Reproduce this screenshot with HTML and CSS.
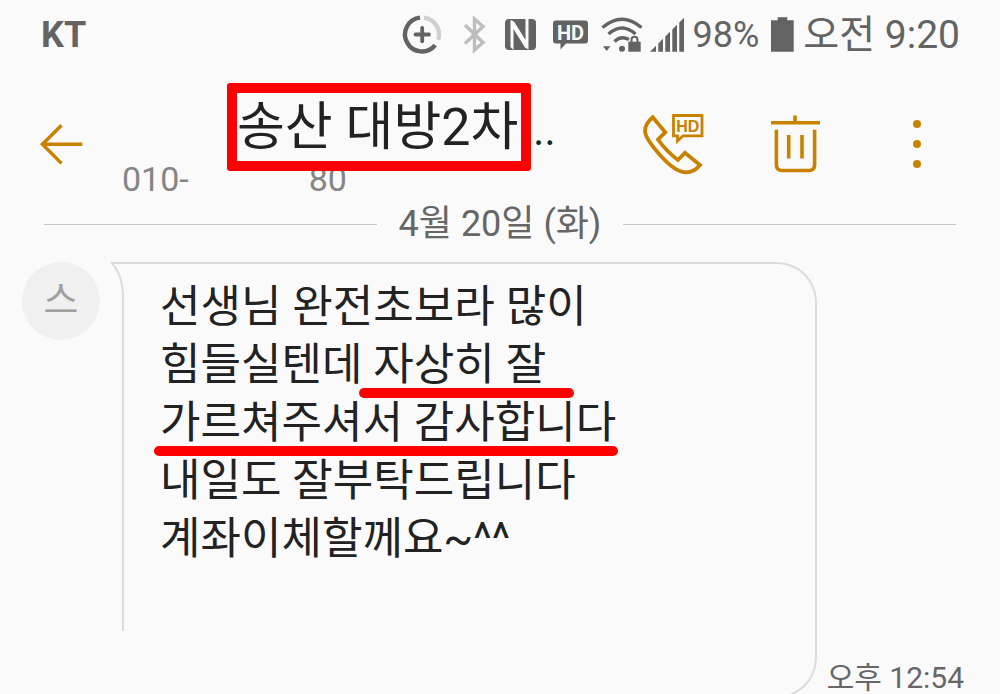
FILE: index.html
```html
<!DOCTYPE html>
<html lang="ko">
<head>
  <meta charset="UTF-8">
  <meta name="viewport" content="width=device-width, initial-scale=1">
  <title>메시지</title>
  <link rel="stylesheet" href="styles.css">
</head>
<body>
  <div class="status-bar">
    <span class="carrier">KT</span>
    <div class="status-icons">
      <!-- data saver -->
      <svg width="42" height="40" fill="none" stroke="#636363" stroke-width="4.4">
        <path d="M19 2.6A17 17 0 1 0 34.2 30.2"/>
        <path d="M23 2.6A17 17 0 0 1 37.2 24.8" stroke="#cfcfcf"/>
        <path d="M14.5 19.5H28M21.2 12.8V26.3" stroke-width="3.8" stroke-linecap="round"/>
      </svg>
      <!-- bluetooth -->
      <svg width="44" height="40" fill="none" stroke="#bdbdbd" stroke-width="3.4">
        <path d="M14 10L32 27.5L23.5 35V4L32 11.5L14 28.5"/>
      </svg>
      <!-- nfc -->
      <svg width="36" height="40">
        <rect x="2" y="4" width="31" height="31" rx="4" fill="#636363"/>
        <path d="M7.5 32V5L11 6.5L22.5 25V4H25.5V34.5L22 32.5L10.5 14V35Z" fill="#fafafa"/>
      </svg>
      <!-- hd voice -->
      <svg width="46" height="40">
        <path d="M9 5.5H38Q41 5.5 41 8.5V25.5Q41 28.5 38 28.5H19L13.5 34.5V28.5H9Q6 28.5 6 25.5V8.5Q6 5.5 9 5.5Z" fill="#636363"/>
        <text x="23.5" y="24.5" class="hd-status">HD</text>
      </svg>
      <!-- wifi -->
      <svg width="42" height="40" fill="none" stroke="#636363" stroke-width="3.4">
        <path d="M1.5 12.5Q21 -4 40.5 12.5M7.5 19Q21 7 34.5 19M13.5 26.5Q20 20 28 24.5"/>
        <circle cx="21" cy="33.7" r="3" fill="#636363" stroke="none"/>
        <path d="M2 31.3H9.4L5.7 36Z" fill="#636363" stroke="none"/>
        <path d="M30.5 28V25Q30.5 21.8 33.5 21.8T36.5 25V28" stroke-width="2"/>
        <rect x="27.3" y="26.7" width="12.4" height="10" fill="#636363" stroke="none"/>
      </svg>
      <!-- signal -->
      <svg width="34" height="40" fill="#636363">
        <path d="M-1 36.7L5 30.7V36.7ZM7.3 28.4L12 23.7V36.7H7.3ZM14.3 21.4L19 16.7V36.7H14.3ZM21.3 14.4L26 9.7V36.7H21.3ZM28.3 7.4L33 2.7V36.7H28.3Z"/>
      </svg>
      <span class="battery-level">98%</span>
      <svg width="28" height="40" fill="#636363">
        <path d="M10.7 2.3H20.3V5.3H26.7V36.7H4V5.3H10.7Z"/>
      </svg>
      <span class="clock">오전 9:20</span>
    </div>
  </div>

  <header class="chat-header">
    <button type="button" class="icon-button" aria-label="뒤로">
      <svg width="44" height="44" fill="none" stroke="#c98100" stroke-width="3.4">
        <path d="M42.3 22.3H2.5M21.5 3.2L2.4 22.3L21.5 41.4"/>
      </svg>
    </button>
    <div class="contact">
      <div class="contact-title">
        <h1 class="contact-name">송산 대방2차</h1>
        <span class="contact-more">..</span>
      </div>
      <div class="contact-number"><span>010-</span><span>80</span></div>
    </div>
    <div class="actions">
      <button type="button" class="icon-button" aria-label="HD 통화">
        <svg width="64" height="64" fill="none" stroke="#c98100" stroke-width="3.8">
          <path d="M11.7 5.3L24.3 20.3L17 27.5Q25 39 37 48L44 40.8L59 53Q53 60.5 44.5 60.3Q34 60 19 43Q4 26 4 19Q4 12 11.7 5.3Z"/>
          <path d="M32.5 3.5H61V23.8H42L36.5 29V23.8H32.5Z" stroke-width="2.8"/>
          <text x="46.8" y="19.5" class="hd-call">HD</text>
        </svg>
      </button>
      <button type="button" class="icon-button" aria-label="삭제">
        <svg width="50" height="62" fill="none" stroke="#c98100" stroke-width="3.6">
          <path d="M0 9.7H49M24 2.5V9M5.4 16.7V52Q5.4 57.5 11 57.5H38Q43.6 57.5 43.6 52V16.7M17.7 22V45.5M31 22V45.5"/>
        </svg>
      </button>
      <button type="button" class="icon-button more" aria-label="더보기">
        <svg width="16" height="60" fill="#c98100">
          <circle cx="8" cy="10" r="4"/>
          <circle cx="8" cy="30" r="4"/>
          <circle cx="8" cy="50" r="4"/>
        </svg>
      </button>
    </div>
  </header>

  <main>
    <div class="date-divider">4월 20일 (화)</div>
    <div class="message">
      <div class="avatar">스</div>
      <div class="bubble">
        <svg class="bubble-tail" width="14" height="34" fill="none" stroke="#dcdcdc" stroke-width="2">
          <path d="M14 1H2Q13 14 13 34"/>
        </svg>
        <p>선생님 완전초보라 많이<br>
        힘들실텐데 <span class="underline part">자상히 잘</span><br>
        <span class="underline full">가르쳐주셔서 감사합니다</span><br>
        내일도 잘부탁드립니다<br>
        계좌이체할께요~^^</p>
      </div>
      <time class="sent-time" datetime="12:54">오후 12:54</time>
    </div>
  </main>
</body>
</html>
```

FILE: styles.css
```css
* {
  box-sizing: border-box;
}
body {
  display: flex;
  flex-direction: column;
  height: 100vh;
  margin: 0;
  background: #fafafa;
  color: #222;
  font-family: Roboto, "Noto Sans CJK KR", sans-serif;
}
svg {
  display: block;
  flex-shrink: 0;
  overflow: visible;
}
.status-bar {
  display: flex;
  flex-shrink: 0;
  align-items: center;
  justify-content: space-between;
  height: 69px;
  padding: 0 40px 0 41px;
  color: #636363;
  white-space: nowrap;
}
.carrier {
  font-size: 36px;
  font-weight: bold;
}
.status-icons {
  display: flex;
  align-items: center;
  gap: 8px;
}
.battery-level {
  font-size: 36px;
}
.clock {
  font-size: 39px;
  line-height: 56px;
}
.hd-status,
.hd-call {
  font-weight: bold;
  text-anchor: middle;
  stroke: none;
}
.hd-status {
  font-size: 20px;
  fill: #fafafa;
}
.hd-call {
  font-size: 16px;
  fill: #c98100;
}

.chat-header {
  display: flex;
  flex-shrink: 0;
  align-items: center;
  padding: 14px 53px 0 40px;
}
.icon-button {
  display: flex;
  justify-content: center;
  padding: 0;
  border: 0;
  background: none;
  cursor: pointer;
}
.contact {
  margin-left: 38px;
  padding-bottom: 7px;
}
.contact-title {
  display: flex;
  align-items: baseline;
  margin-left: 105px;
}
.contact-name {
  position: relative;
  z-index: 1;
  margin: 0;
  padding: 2px 3px 0 0;
  border: 10px solid #f00;
  border-radius: 3px;
  font-size: 52px;
  font-weight: normal;
  line-height: 66px;
  white-space: nowrap;
}
.contact-more {
  margin-left: 2px;
  font-size: 42px;
  line-height: 40px;
}
.contact-number {
  display: flex;
  gap: 120px;
  margin-top: -10px;
  color: #858585;
  font-size: 34px;
  line-height: 36px;
}
.actions {
  display: flex;
  align-items: center;
  gap: 66px;
  margin-left: auto;
}
.more {
  width: 60px;
}

main {
  flex: 1;
  overflow: hidden;
}
.date-divider {
  display: flex;
  align-items: center;
  gap: 22px;
  padding: 0 44px;
  color: #666;
  font-size: 36px;
  line-height: 40px;
}
.date-divider::before,
.date-divider::after {
  content: "";
  flex: 1;
  height: 1px;
  background: #c8c8c8;
}

.message {
  display: flex;
  padding: 0 36px 0 22px;
  margin-top: 18px;
}
.avatar {
  flex-shrink: 0;
  width: 78px;
  height: 78px;
  border-radius: 50%;
  background: #f0f0f0;
  color: #a0a0a0;
  font-size: 38px;
  line-height: 76px;
  text-align: center;
}
.bubble {
  position: relative;
  flex: 1;
  margin: 0 10px 0 22px;
  padding: 14px 0 128px 38px;
  border: 2px solid #dcdcdc;
  border-left: 0;
  border-radius: 0 40px 40px 0;
}
/* left edge stops short of the bottom */
.bubble::before {
  content: "";
  position: absolute;
  top: 30px;
  bottom: 65px;
  left: 0;
  width: 2px;
  background: #dcdcdc;
}
.bubble-tail {
  position: absolute;
  top: -2px;
  left: -12px;
}
.bubble p {
  margin: 0;
  font-size: 44px;
  line-height: 58px;
}
.underline {
  position: relative;
}
.underline::after {
  content: "";
  position: absolute;
  bottom: -7px;
  height: 10px;
  border-radius: 5px;
  background: #f00;
}
.part::after {
  left: -14px;
  right: -28px;
}
.full::after {
  left: -6px;
  right: -2px;
}
.sent-time {
  align-self: flex-end;
  margin-bottom: 4px;
  color: #666;
  font-size: 30px;
  line-height: 32px;
  white-space: nowrap;
}
```
